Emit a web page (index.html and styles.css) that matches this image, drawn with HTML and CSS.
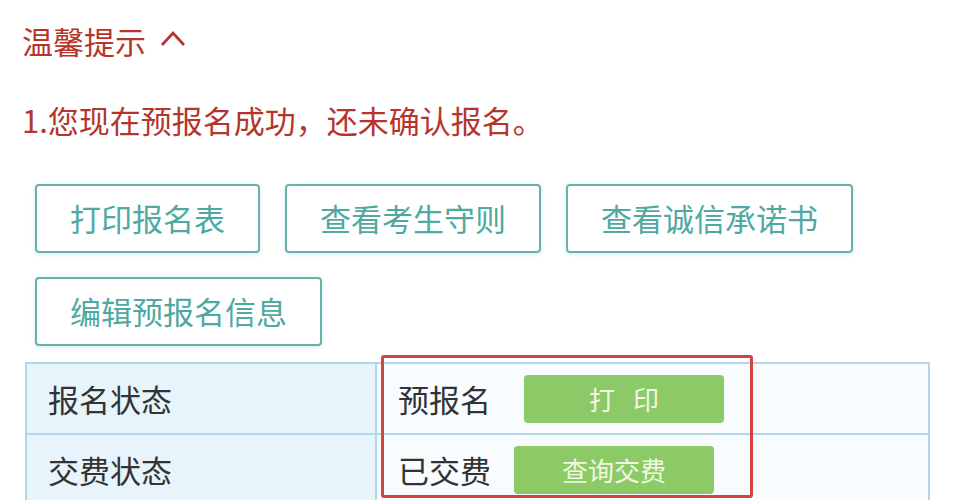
FILE: index.html
```html
<!DOCTYPE html>
<html lang="zh-CN">
<head>
    <meta charset="UTF-8">
    <meta name="viewport" content="width=device-width, initial-scale=1.0">
    <title>温馨提示</title>
    <link rel="stylesheet" href="styles.css">
</head>
<body>
    <div class="page">
        <div class="tip-title">
            <span>温馨提示</span>
            <svg class="chevron" width="26" height="17" viewBox="0 0 26 17">
                <polyline points="2,15 13,3 24,15" fill="none" stroke="#b5352c" stroke-width="2.6"/>
            </svg>
        </div>
        <p class="tip-text">1.您现在预报名成功，还未确认报名。</p>

        <div class="actions">
            <a class="btn-outline" href="#">打印报名表</a>
            <a class="btn-outline" href="#">查看考生守则</a>
            <a class="btn-outline" href="#">查看诚信承诺书</a>
            <a class="btn-outline" href="#">编辑预报名信息</a>
        </div>

        <div class="status-wrap">
            <table class="status">
                <tr>
                    <th>报名状态</th>
                    <td>
                        <div class="cell">
                            <span>预报名</span>
                            <a class="btn-green wide-gap" href="#">打 印</a>
                        </div>
                    </td>
                </tr>
                <tr>
                    <th>交费状态</th>
                    <td>
                        <div class="cell">
                            <span>已交费</span>
                            <a class="btn-green" href="#">查询交费</a>
                        </div>
                    </td>
                </tr>
            </table>
            <!-- red highlight box drawn over the table -->
            <div class="highlight"></div>
        </div>
    </div>
</body>
</html>
```

FILE: styles.css
```css
body {
    margin: 0;
    padding: 0;
    background-color: #fff;
    font-family: "Noto Sans CJK SC", "Noto Sans", sans-serif;
    overflow: hidden;
}
.page {
    padding: 20px 0 0 22px;
}
.tip-title {
    display: flex;
    align-items: center;
    height: 40px;
    font-size: 31px;
    color: #b5352c;
}
.chevron {
    margin-left: 14px;
    margin-top: -4px;
}
.tip-text {
    margin: 40px 0 0 0;
    height: 40px;
    line-height: 40px;
    font-size: 31px;
    color: #b5352c;
}
.actions {
    display: flex;
    flex-wrap: wrap;
    gap: 24px 25px;
    width: 860px;
    margin: 44px 0 0 13px;
}
.btn-outline {
    display: block;
    height: 65px;
    line-height: 64px;
    padding: 0 33px;
    border: 2px solid #67b2ab;
    border-radius: 4px;
    font-size: 31px;
    color: #4fa9a0;
    text-decoration: none;
    box-shadow: 0 1px 4px rgba(90, 175, 165, 0.25);
}
.status-wrap {
    position: relative;
    width: 905px;
    margin: 16px 0 0 3px;
}
.status {
    width: 100%;
    border-collapse: collapse;
}
.status th,
.status td {
    height: 69px;
    padding: 0 0 0 21px;
    border: 2px solid #b3d6ea;
    text-align: left;
    font-size: 31px;
    font-weight: normal;
    color: #333;
}
.status th {
    width: 327px;
    background-color: #e7f4fb;
}
.status td {
    background-color: #f8fcfe;
}
.cell {
    display: flex;
    align-items: center;
}
.btn-green {
    display: block;
    width: 200px;
    height: 48px;
    line-height: 48px;
    margin-left: 23px;
    border-radius: 4px;
    background-color: #8cca68;
    color: #f1f8e2;
    font-size: 26px;
    text-align: center;
    text-decoration: none;
}
.btn-green.wide-gap {
    margin-left: 33px;
    word-spacing: 12px;
}
.highlight {
    position: absolute;
    left: 356px;
    top: -7px;
    width: 366px;
    height: 137px;
    border: 3px solid #d2453c;
    border-radius: 3px;
}
```
